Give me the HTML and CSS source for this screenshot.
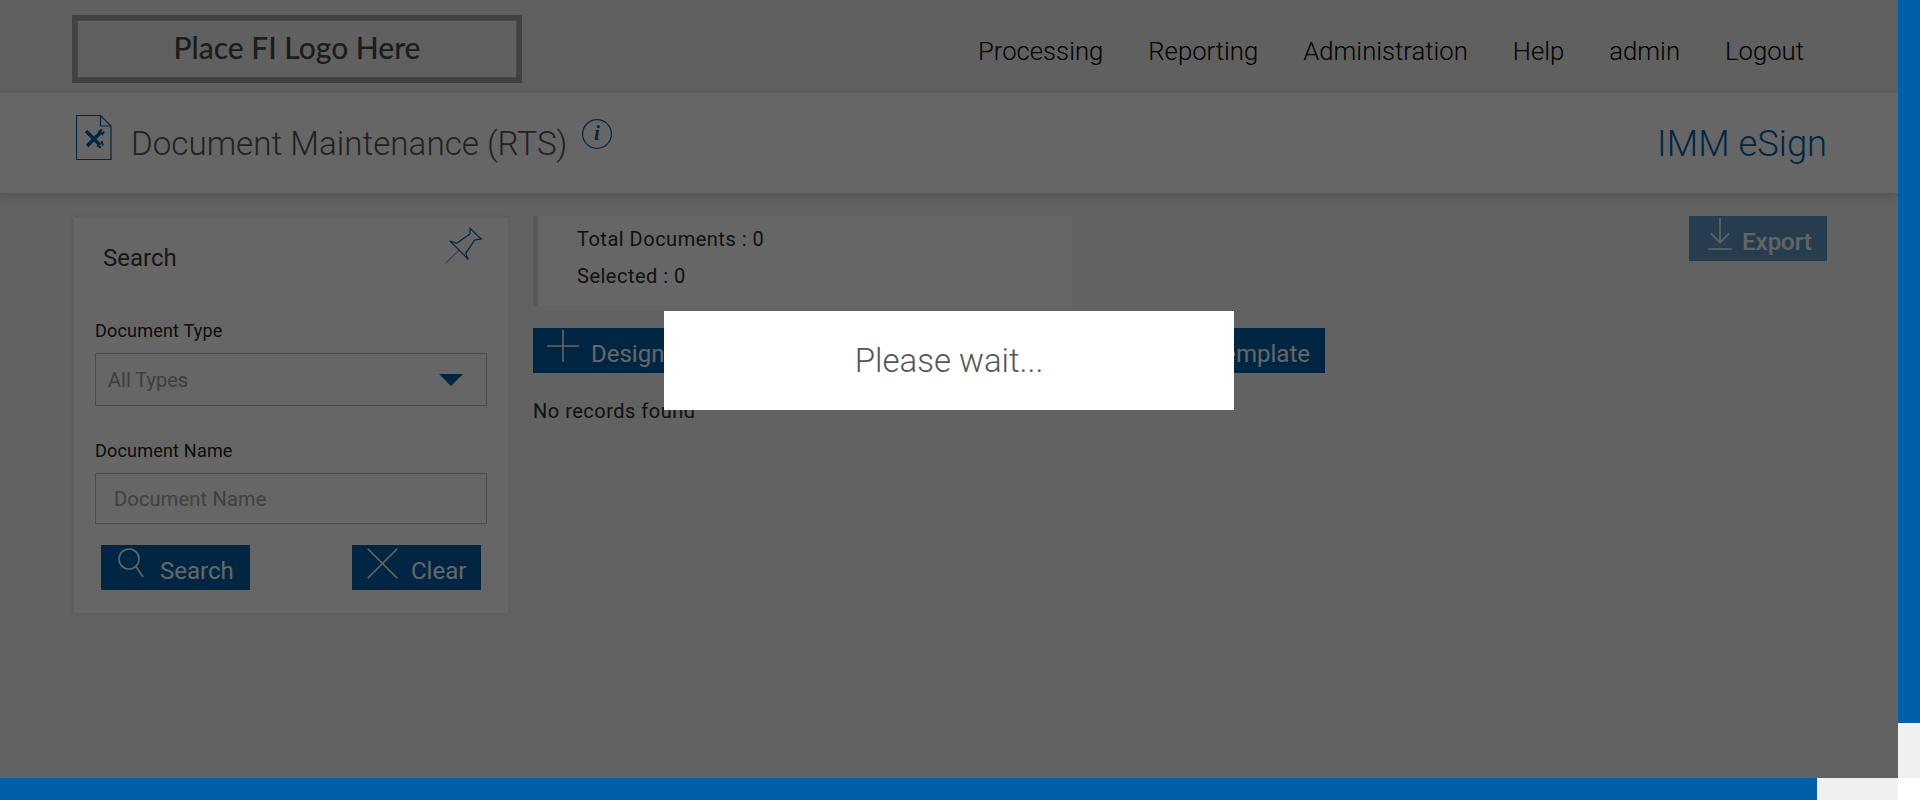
FILE: index.html
```html
<!DOCTYPE html>
<html lang="en">
<head>
<meta charset="utf-8">
<title>Document Maintenance (RTS)</title>
<link rel="stylesheet" href="styles.css">
</head>
<body>
<div class="frame">
  <main class="page">
    <header class="topbar">
      <div class="logo">Place FI Logo Here</div>
      <nav class="nav">
        <a>Processing</a><a>Reporting</a><a>Administration</a><a>Help</a><a>admin</a><a>Logout</a>
      </nav>
    </header>
    <section class="titlebar">
      <svg class="doc-icon" width="36" height="45" viewBox="0 0 36 45" aria-hidden="true">
        <path class="line" d="M.5.5H24.5L35 11V44.5H.5Z M24.5.5V11H35"/>
        <path class="tool" d="M10 16L24 30M25.500 16.500L11 31"/>
        <path class="tool-fork" d="M22.500 17L26 14.500M26 20L28 16.500M21 30.500L25 32.500M25.500 26L27 30.500"/>
      </svg>
      <h1 class="title">Document Maintenance (RTS)</h1>
      <svg class="info-icon" width="30" height="30" viewBox="0 0 30 30" aria-hidden="true">
        <circle class="line" cx="15" cy="15" r="14.400"/>
        <text class="info-i" x="15" y="21" text-anchor="middle">i</text>
      </svg>
      <div class="product">IMM eSign</div>
    </section>
    <div class="content">
      <aside class="panel">
        <svg class="pin" width="60" height="50" viewBox="0 0 60 50" aria-hidden="true">
          <path class="line" d="M36 8.300L47.300 19 40.700 20 31.700 33.300 34.300 39.300 16 21 22.700 23.300 36 14Z"/>
          <path class="line fade" d="M25 30L11.700 43.300"/>
        </svg>
        <h2 class="panel-title">Search</h2>
        <label class="field-label">Document Type</label>
        <div class="select"><span>All Types</span><i class="caret"></i></div>
        <label class="field-label second">Document Name</label>
        <input class="input" type="text" placeholder="Document Name">
        <div class="panel-actions">
          <button class="btn btn-search">
            <svg width="26" height="31" viewBox="0 0 26 31" aria-hidden="true"><circle class="wline" cx="11" cy="11" r="10"/><path class="wline" d="M18 18.500L25 29"/></svg>
            <span>Search</span>
          </button>
          <button class="btn btn-clear">
            <svg width="31" height="31" viewBox="0 0 31 31" aria-hidden="true"><path class="wline" d="M.7.7L30.300 30.300M30.300.7L.7 30.300"/></svg>
            <span>Clear</span>
          </button>
        </div>
      </aside>
      <section class="results">
        <div class="results-top">
          <div class="stats">
            <p>Total Documents : 0</p>
            <p>Selected : 0</p>
          </div>
          <button class="btn btn-export">
            <svg width="24" height="32" viewBox="0 0 24 32" aria-hidden="true"><path class="wline" d="M12 0V24M3 15.500L12 24.500 21 15.500M0 31H24"/></svg>
            <span>Export</span>
          </button>
        </div>
        <div class="actions">
          <button class="btn btn-wide">
            <svg width="32" height="32" viewBox="0 0 32 32" aria-hidden="true"><path class="wline" d="M16 0V32M0 16H32"/></svg>
            <span>Design Document</span>
          </button>
          <button class="btn btn-wide btn-right"><span>Upload Template</span></button>
        </div>
        <p class="empty">No records found</p>
      </section>
    </div>
    <div class="overlay"></div>
    <div class="modal">Please wait...</div>
  </main>
  <div class="rail"><div class="rail-thumb"></div></div>
  <div class="bottom"><div class="bottom-thumb"></div></div>
  <div class="corner"></div>
</div>
</body>
</html>
```
FILE: styles.css
```css
* { box-sizing: border-box; }
html, body { margin: 0; height: 100%; overflow: hidden; }
body { font-family: Roboto, "Liberation Sans", sans-serif; background: #fff; color: #444; }
p, h1, h2 { margin: 0; font-weight: inherit; }

.frame { display: grid; grid-template-columns: 1898px 22px; grid-template-rows: 778px 22px; width: 1920px; height: 800px; }
.page { position: relative; background: #f4f4f4; overflow: hidden; }
.rail { background: #f0f0f0; }
.rail-thumb { height: 723px; background: #005fa8; }
.bottom { background: #f0f0f0; }
.bottom-thumb { width: 1817px; height: 22px; background: #005fa8; }
.corner { background: #fff; }

.topbar { display: flex; align-items: flex-start; justify-content: space-between; height: 93px; padding: 15px 94px 0 72px; background: #f0f0f0; }
.logo { width: 450px; height: 68px; padding-bottom: 4px; border: 5px solid #a2a2a2; outline: 1px solid #b4b4b4; outline-offset: -6px; display: flex; align-items: center; justify-content: center; font-family: Lato, sans-serif; font-weight: 500; font-size: 30px; color: #484848; }
.nav { display: flex; gap: 45px; padding-top: 20px; font-size: 25.700px; font-weight: 300; line-height: 32px; color: #000; }

.titlebar { position: relative; display: flex; align-items: flex-start; height: 100px; padding: 22px 71px 0 76px; background: #fff; box-shadow: 0 3px 8px rgba(0, 0, 0, .18); }
.doc-icon { flex: none; }
.line { fill: none; stroke: #0060a9; stroke-width: 1.2; }
.fade { stroke-opacity: .5; }
.tool { fill: none; stroke: #0060a9; stroke-width: 3.4; }
.tool-fork { fill: none; stroke: #0060a9; stroke-width: 2; }
.wline { fill: none; stroke: #fff; stroke-width: 1.600; }
.title { margin: 9px 0 0 19px; font-size: 33.200px; font-weight: 300; line-height: 40px; color: #555; }
.info-icon { flex: none; margin: 4px 0 0 15px; }
.info-i { font-family: "Liberation Serif", serif; font-style: italic; font-weight: 700; font-size: 21px; fill: #0060a9; }
.product { margin: 7px 0 0 auto; font-size: 36.300px; font-weight: 300; line-height: 44px; color: #0060a9; }

.content { display: flex; align-items: flex-start; gap: 24px; padding: 23px 71px 0 73px; }
.panel { position: relative; flex: none; width: 436px; height: 397px; margin-top: 1px; padding: 24px 21px 0; background: #fff; border: 1px solid #ededed; box-shadow: 0 0 3px rgba(0, 0, 0, .12); }
.pin { position: absolute; top: 2px; right: 14px; }
.panel-title { margin-left: 8px; font-size: 24px; line-height: 32px; color: #3a3a3a; }
.field-label { display: block; margin-top: 46px; font-size: 18px; letter-spacing: .2px; line-height: 22px; color: #222; }
.field-label.second { margin-top: 34px; }
.select { display: flex; align-items: center; justify-content: space-between; height: 53px; margin-top: 11px; padding: 0 23px 0 12px; border: 1px solid #bcbcbc; font-size: 20px; color: #999; }
.caret { width: 0; height: 0; border: 12px solid transparent; border-top-color: #0060a9; border-bottom: 0; }
.input { display: block; width: 100%; height: 51px; margin-top: 11px; padding: 0 18px; border: 1px solid #bcbcbc; background: transparent; font: 20px Roboto, sans-serif; letter-spacing: .2px; }
.input::placeholder { color: #a0a0a0; opacity: 1; }
.panel-actions { display: flex; justify-content: space-between; margin: 21px 6px 0; }

.btn { display: flex; align-items: center; height: 45px; border: 0; padding: 0; background: #0060a9; color: #fff; font: 24px Roboto, sans-serif; }
.btn span { padding-top: 6px; }
.btn-search { width: 149px; padding-left: 17px; gap: 16px; }
.btn-clear { width: 129px; padding-left: 15px; gap: 13px; }
.btn svg { margin-top: -9px; flex: none; }
.btn-export { width: 138px; padding-left: 19px; gap: 10px; opacity: .6; font-weight: 500; }

.results { flex: 1; min-width: 0; }
.results-top { display: flex; justify-content: space-between; align-items: flex-start; }
.stats { width: 539px; height: 90px; padding: 5px 0 0 39px; background: #fff; border-left: 5px solid #dcdcdc; font-size: 20px; line-height: 37px; color: #2b2b2b; letter-spacing: .5px; }
.actions { display: flex; width: 792px; margin-top: 22px; }
.btn-wide { flex: 1; padding-left: 14px; gap: 12px; white-space: nowrap; }
.btn-right { justify-content: flex-end; padding-right: 15px; }
.empty { margin-top: 26px; font-size: 20px; letter-spacing: .5px; line-height: 24px; color: #2b2b2b; }

.overlay { position: absolute; inset: 0; background: rgba(0, 0, 0, .6); }
.modal { position: absolute; left: 664px; top: 311px; width: 570px; height: 99px; display: flex; align-items: center; justify-content: center; background: #fff; font-size: 33px; font-weight: 300; color: #555; }
```
